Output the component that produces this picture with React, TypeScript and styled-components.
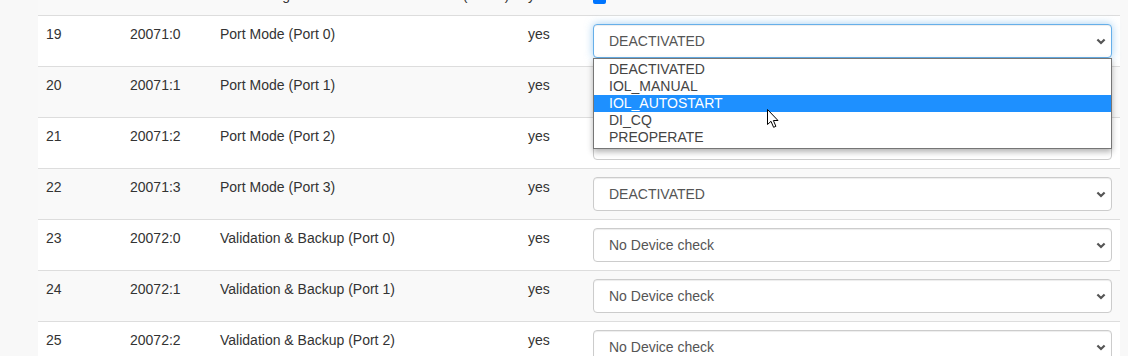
import styled, { createGlobalStyle, css } from "styled-components";

const GlobalStyle = createGlobalStyle`
  html, body {
    margin: 0;
    padding: 0;
    background: #ffffff;
    font-family: "Liberation Sans", Arial, sans-serif;
    font-size: 14px;
    color: #333;
  }
`;

interface ParamRow {
  idx: string;
  index: string;
  name: string;
  writable: string;
  kind: "checkbox" | "select";
  value?: string;
  open?: boolean;
}

const PORT_MODES = ["DEACTIVATED", "IOL_MANUAL", "IOL_AUTOSTART", "DI_CQ", "PREOPERATE"];

const rows: ParamRow[] = [
  { idx: "18", index: "20070:3", name: "Port Configuration Lock Status Control (Port 3)", writable: "yes", kind: "checkbox" },
  { idx: "19", index: "20071:0", name: "Port Mode (Port 0)", writable: "yes", kind: "select", value: "DEACTIVATED", open: true },
  { idx: "20", index: "20071:1", name: "Port Mode (Port 1)", writable: "yes", kind: "select", value: "DEACTIVATED" },
  { idx: "21", index: "20071:2", name: "Port Mode (Port 2)", writable: "yes", kind: "select", value: "DEACTIVATED" },
  { idx: "22", index: "20071:3", name: "Port Mode (Port 3)", writable: "yes", kind: "select", value: "DEACTIVATED" },
  { idx: "23", index: "20072:0", name: "Validation & Backup (Port 0)", writable: "yes", kind: "select", value: "No Device check" },
  { idx: "24", index: "20072:1", name: "Validation & Backup (Port 1)", writable: "yes", kind: "select", value: "No Device check" },
  { idx: "25", index: "20072:2", name: "Validation & Backup (Port 2)", writable: "yes", kind: "select", value: "No Device check" },
];

// page is scrolled a bit, row 18 is cut at the top
const Page = styled.div`
  width: 1128px;
  box-sizing: border-box;
  margin-top: -24px;
  padding: 0 8px 0 38px;
  background: #f8f8f8;
`;

const Table = styled.table`
  width: 1082px;
  border-collapse: collapse;
  table-layout: fixed;
`;

const Row = styled.tr<{ $striped: boolean }>`
  background: ${({ $striped }) => ($striped ? "#f9f9f9" : "#ffffff")};
`;

const Td = styled.td`
  padding: 8px;
  border-top: 1px solid #ddd;
  line-height: 20px;
  vertical-align: top;
  font-size: 14px;
  color: #333;
  white-space: nowrap;
`;

const Checkbox = styled.span`
  display: block;
  width: 13px;
  height: 13px;
  margin: 6px 0 3px 0;
  box-sizing: border-box;
  border-radius: 2px;
  background: #0075ff;
`;

const SelectWrap = styled.div`
  position: relative;
`;

const Select = styled.select<{ $focused?: boolean }>`
  display: block;
  width: 100%;
  height: 34px;
  box-sizing: border-box;
  padding: 6px 12px 6px 15px;
  font-family: "Liberation Sans", Arial, sans-serif;
  font-size: 14px;
  color: #555;
  background: #fff;
  border: 1px solid #ccc;
  border-radius: 4px;
  appearance: none;
  -webkit-appearance: none;
  outline: none;
  box-shadow: inset 0 1px 1px rgba(0, 0, 0, 0.075);
  ${({ $focused }) =>
    $focused &&
    css`
      border-color: #66afe9;
      box-shadow: inset 0 1px 1px rgba(0, 0, 0, 0.075), 0 0 8px rgba(102, 175, 233, 0.6);
    `}
`;

const Chevron = styled.svg`
  position: absolute;
  right: 6px;
  top: 14px;
  pointer-events: none;
`;

const OptionList = styled.ul`
  position: absolute;
  z-index: 10;
  top: 34px;
  left: 0;
  right: 0;
  margin: 0;
  padding: 2px 0;
  list-style: none;
  background: #fff;
  border: 1px solid #767676;
  box-shadow: 0 3px 6px rgba(0, 0, 0, 0.3);
`;

const OptionItem = styled.li<{ $active?: boolean }>`
  height: 17px;
  line-height: 17px;
  padding-left: 15px;
  font-size: 14px;
  color: ${({ $active }) => ($active ? "#fff" : "#444")};
  background: ${({ $active }) => ($active ? "#1e90ff" : "transparent")};
`;

const Cursor = styled.svg`
  position: fixed;
  left: 767px;
  top: 109px;
  z-index: 20;
`;

const ParamSelect = ({ row }: { row: ParamRow }) => (
  <SelectWrap>
    <Select $focused={row.open} defaultValue={row.value}>
      <option>{row.value}</option>
    </Select>
    <Chevron width="10" height="7" viewBox="0 0 10 7">
      <path d="M1.4 1.5 L5 5 L8.6 1.5" fill="none" stroke="#555" strokeWidth="2.2" />
    </Chevron>
    {row.open && (
      <OptionList>
        {PORT_MODES.map((m) => (
          <OptionItem key={m} $active={m === "IOL_AUTOSTART"}>
            {m}
          </OptionItem>
        ))}
      </OptionList>
    )}
  </SelectWrap>
);

export default function App() {
  return (
    <>
      <GlobalStyle />
      <Page>
        <Table>
          <colgroup>
            <col style={{ width: 84 }} />
            <col style={{ width: 90 }} />
            <col style={{ width: 308 }} />
            <col style={{ width: 65 }} />
            <col style={{ width: 535 }} />
          </colgroup>
          <tbody>
            {rows.map((r, i) => (
              <Row key={r.idx} $striped={i % 2 === 0}>
                <Td>{r.idx}</Td>
                <Td>{r.index}</Td>
                <Td>{r.name}</Td>
                <Td>{r.writable}</Td>
                <Td>{r.kind === "checkbox" ? <Checkbox /> : <ParamSelect row={r} />}</Td>
              </Row>
            ))}
          </tbody>
        </Table>
      </Page>
      <Cursor width="13" height="20" viewBox="0 0 13 20">
        <path
          d="M0.5 0.5 L0.5 15.5 L4 12.3 L6.6 18.3 L8.9 17.3 L6.4 11.5 L11 11.5 Z"
          fill="#fff"
          stroke="#000"
          strokeWidth="1"
          strokeLinejoin="miter"
        />
      </Cursor>
    </>
  );
}
